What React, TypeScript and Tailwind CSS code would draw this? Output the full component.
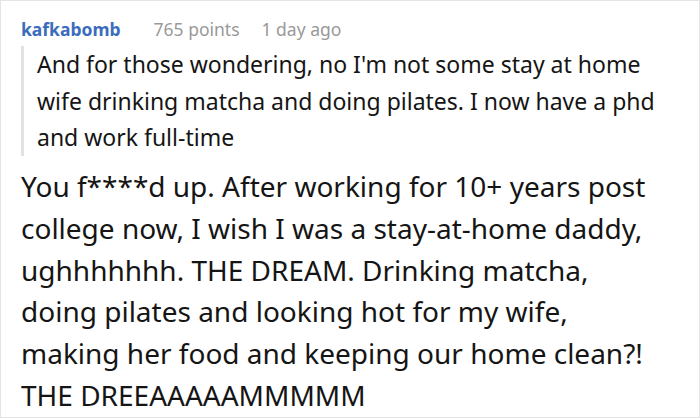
const quoteLines = [
  "And for those wondering, no I'm not some stay at home",
  "wife drinking matcha and doing pilates. I now have a phd",
  "and work full-time",
]

const replyLines = [
  "You f****d up. After working for 10+ years post",
  "college now, I wish I was a stay-at-home daddy,",
  "ughhhhhhh. THE DREAM. Drinking matcha,",
  "doing pilates and looking hot for my wife,",
  "making her food and keeping our home clean?!",
  "THE DREEAAAAAMMMMM",
]

export default function App() {
  return (
    <div
      className="flex h-[418px] w-[700px] flex-col overflow-hidden border border-[#e4e4e4] bg-white pl-[20px] pt-[16px]"
      style={{ fontFamily: '"Noto Sans", "Open Sans", sans-serif' }}
    >
      {/* comment header */}
      <div className="flex items-baseline gap-[33px] leading-[24px]">
        <span className="text-[17.5px] font-bold text-[#3b6cbe]">kafkabomb</span>
        <div className="flex items-baseline gap-[22px] text-[17.5px] text-[#999]">
          <span>765 points</span>
          <span>1 day ago</span>
        </div>
      </div>

      {/* quoted text */}
      <blockquote className="mt-[5px] border-l-[3px] border-[#e2e2e2] pl-[13px] text-[23px] leading-[36.7px] text-[#151515]">
        {quoteLines.map((line) => (
          <span key={line} className="block whitespace-nowrap">
            {line}
          </span>
        ))}
      </blockquote>

      {/* reply */}
      <p className="mt-[10px] text-[28px] leading-[41.7px] text-[#151515]">
        {replyLines.map((line) => (
          <span key={line} className="block whitespace-nowrap">
            {line}
          </span>
        ))}
      </p>
    </div>
  )
}
